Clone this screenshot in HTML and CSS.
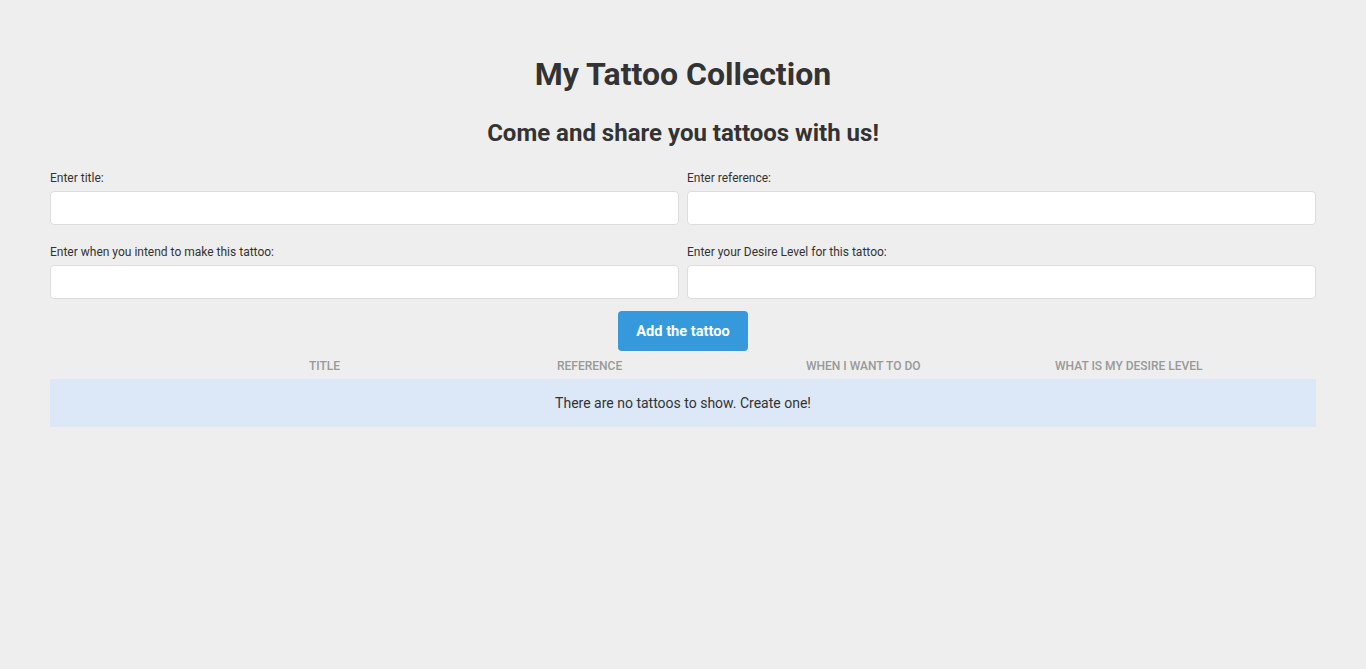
FILE: index.html
```html
<!DOCTYPE html>
<html>
<head>
<meta charset="utf-8">
<link rel="stylesheet" href="styles.css">
</head>
<body>
<div class="container">
  <h1 class="title">My Tattoo Collection</h1>
  <h2 class="subtitle">Come and share you tattoos with us!</h2>
  <form class="form">
    <div class="field">
      <label class="label">Enter title:</label>
      <input class="input" type="text">
    </div>
    <div class="field">
      <label class="label">Enter reference:</label>
      <input class="input" type="text">
    </div>
    <div class="field">
      <label class="label">Enter when you intend to make this tattoo:</label>
      <input class="input" type="text">
    </div>
    <div class="field">
      <label class="label">Enter your Desire Level for this tattoo:</label>
      <input class="input" type="text">
    </div>
  </form>
  <div class="actions">
    <button class="btn" type="button">Add the tattoo</button>
  </div>
  <div class="table-head">
    <span></span>
    <span>Title</span>
    <span>Reference</span>
    <span>When I want to do</span>
    <span>What is my desire level</span>
  </div>
  <div class="empty">There are no tattoos to show. Create one!</div>
</div>
</body>
</html>
```
FILE: styles.css
```css
html, body {
  margin: 0;
  padding: 0;
  background: #eeeeee;
  font-family: Roboto, "Liberation Sans", sans-serif;
  color: #333333;
}
.container {
  padding: 0 50px;
}
.title {
  margin: 55px 0 0;
  font-size: 32px;
  line-height: 38px;
  font-weight: 700;
  text-align: center;
}
.subtitle {
  margin: 26px 0 0;
  font-size: 24px;
  line-height: 28px;
  font-weight: 700;
  text-align: center;
}
.form {
  margin-top: 23px;
  display: grid;
  grid-template-columns: 1fr 1fr;
  column-gap: 8px;
  row-gap: 19px;
}
.field {
  display: flex;
  flex-direction: column;
}
.label {
  font-size: 12px;
  line-height: 16px;
  margin-bottom: 5px;
  color: #333;
}
.input {
  box-sizing: border-box;
  height: 34px;
  border: 1px solid #dddddd;
  border-radius: 4px;
  background: #ffffff;
  margin: 0;
  font-family: inherit;
}
.actions {
  display: flex;
  justify-content: center;
  margin-top: 12px;
}
.btn {
  width: 130px;
  height: 40px;
  border: none;
  border-radius: 4px;
  background: #3699dc;
  color: #ffffff;
  font-family: inherit;
  font-size: 14.6px;
  font-weight: 700;
  cursor: pointer;
}
.table-head {
  display: grid;
  grid-template-columns: 259px 248px 249px 249px 1fr;
  height: 28px;
  box-sizing: border-box;
  padding-top: 2px;
  align-items: center;
  font-size: 12px;
  font-weight: 500;
  text-transform: uppercase;
  color: #999999;
}
.empty {
  height: 48px;
  background: #dce8f8;
  display: flex;
  align-items: center;
  justify-content: center;
  font-size: 14px;
  color: #333;
}
```
